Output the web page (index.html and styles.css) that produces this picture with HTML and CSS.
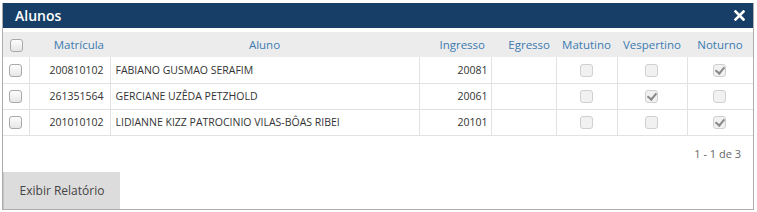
FILE: index.html
```html
<!DOCTYPE html>
<html lang="pt-BR">
<head>
    <meta charset="UTF-8">
    <title>Alunos</title>
    <link rel="stylesheet" href="styles.css">
</head>
<body>
    <div class="window">
        <div class="window-title">
            <span>Alunos</span>
            <button class="close-button" title="Fechar">
                <svg width="11" height="11" viewBox="0 0 11 11">
                    <path d="M1.5 1.5 L9.5 9.5 M9.5 1.5 L1.5 9.5" stroke="#fff" stroke-width="2.6" stroke-linecap="square"/>
                </svg>
            </button>
        </div>

        <div class="window-content">
            <table class="grid">
                <colgroup>
                    <col class="col-check">
                    <col class="col-matricula">
                    <col class="col-aluno">
                    <col class="col-ingresso">
                    <col class="col-egresso">
                    <col class="col-turno">
                    <col class="col-turno2">
                    <col class="col-turno3">
                </colgroup>
                <thead>
                    <tr>
                        <th class="check-cell"><input type="checkbox"></th>
                        <th class="right">Matrícula</th>
                        <th>Aluno</th>
                        <th class="right">Ingresso</th>
                        <th class="right">Egresso</th>
                        <th>Matutino</th>
                        <th>Vespertino</th>
                        <th>Noturno</th>
                    </tr>
                </thead>
                <tbody>
                    <tr>
                        <td class="check-cell"><input type="checkbox"></td>
                        <td class="right">200810102</td>
                        <td>FABIANO GUSMAO SERAFIM</td>
                        <td class="right tight">20081</td>
                        <td></td>
                        <td class="center"><input type="checkbox" disabled></td>
                        <td class="center"><input type="checkbox" disabled></td>
                        <td class="center"><input type="checkbox" disabled checked></td>
                    </tr>
                    <tr>
                        <td class="check-cell"><input type="checkbox"></td>
                        <td class="right">261351564</td>
                        <td>GERCIANE UZÊDA PETZHOLD</td>
                        <td class="right tight">20061</td>
                        <td></td>
                        <td class="center"><input type="checkbox" disabled></td>
                        <td class="center"><input type="checkbox" disabled checked></td>
                        <td class="center"><input type="checkbox" disabled></td>
                    </tr>
                    <tr>
                        <td class="check-cell"><input type="checkbox"></td>
                        <td class="right">201010102</td>
                        <td>LIDIANNE KIZZ PATROCINIO VILAS-BÔAS RIBEI</td>
                        <td class="right tight">20101</td>
                        <td></td>
                        <td class="center"><input type="checkbox" disabled></td>
                        <td class="center"><input type="checkbox" disabled></td>
                        <td class="center"><input type="checkbox" disabled checked></td>
                    </tr>
                </tbody>
            </table>

            <div class="pager">1 - 1 de 3</div>

            <div class="actions">
                <button class="report-button">Exibir Relatório</button>
            </div>
        </div>
    </div>
</body>
</html>
```

FILE: styles.css
```css
body {
    margin: 0;
    font-family: "Open Sans", "Noto Sans", Arial, sans-serif;
    background-color: #fff;
    color: #333;
}

.window {
    margin: 3px 0 0 2px;
    width: 750px;
    border: 1px solid #acacac;
    border-top: none;
    background-color: #fff;
}

.window-title {
    height: 25px;
    background-color: #163e66;
    color: #fff;
    display: flex;
    align-items: center;
    justify-content: space-between;
    padding: 0 8px 0 12px;
    font-size: 14px;
    font-weight: 600;
}

.close-button {
    border: none;
    background: none;
    padding: 0;
    width: 12px;
    height: 12px;
    display: flex;
    align-items: center;
    justify-content: center;
    cursor: pointer;
}

.window-content {
    padding-top: 4px;
}

/* tabela */
.grid {
    width: 750px;
    border-collapse: collapse;
    table-layout: fixed;
    font-size: 10.5px;
}

.grid th,
.grid td {
    box-sizing: border-box;
}

.grid th {
    background-color: #ececec;
    color: #3b7bb0;
    font-weight: normal;
    font-size: 11.5px;
    height: 25px;
    padding: 0 6px;
    text-align: center;
    white-space: nowrap;
}

.grid td {
    height: 26px;
    padding: 0 6px 0 5px;
    border: 1px solid #e2e2e2;
    border-top: none;
    white-space: nowrap;
    overflow: hidden;
}

.grid tr td:first-child {
    border-left: none;
}

.grid tr td:last-child {
    border-right: none;
}

.grid .right {
    text-align: right;
}

.grid td.tight {
    padding-right: 3px;
}

.grid .center {
    text-align: center;
}

.col-check { width: 26px; }
.col-matricula { width: 81px; }
.col-aluno { width: 309px; }
.col-ingresso { width: 72px; }
.col-egresso { width: 65px; }
.col-turno { width: 61px; }
.col-turno2 { width: 70px; }
.col-turno3 { width: 66px; }

.grid .check-cell {
    padding: 0;
    text-align: center;
}

/* checkbox */
.grid input[type="checkbox"] {
    appearance: none;
    -webkit-appearance: none;
    width: 13px;
    height: 13px;
    margin: 0;
    vertical-align: middle;
    border: 1px solid #a9a9a9;
    border-radius: 3px;
    background: linear-gradient(#fdfdfd, #e6e6e6);
    position: relative;
}

.grid input[type="checkbox"]:disabled {
    border-color: #d0d0d0;
    background: #f1f1f1;
}

.grid input[type="checkbox"]:checked::after {
    content: "";
    position: absolute;
    left: 3px;
    top: 0px;
    width: 4px;
    height: 7px;
    border: solid #8a8a8a;
    border-width: 0 2px 2px 0;
    transform: rotate(40deg);
}

/* paginação */
.pager {
    box-sizing: border-box;
    text-align: right;
    padding: 10px 12px 0 0;
    height: 36px;
    font-size: 11px;
    color: #666;
}

.report-button {
    width: 117px;
    height: 37px;
    border: none;
    border-left: 1px solid #c4c4c4;
    background-color: #dcdcdc;
    color: #444;
    font-family: inherit;
    font-size: 12px;
    padding: 0;
    display: block;
}
```
